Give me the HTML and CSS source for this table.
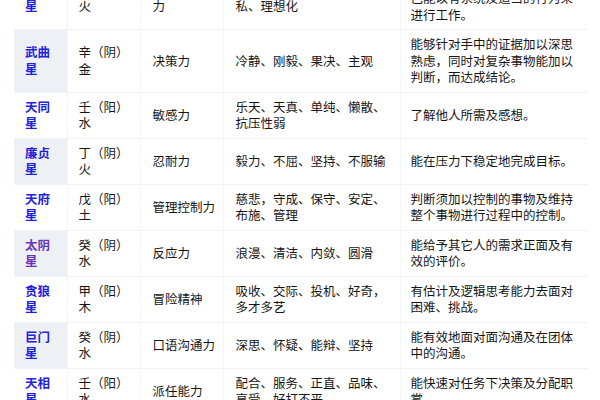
FILE: index.html
```html
<!DOCTYPE html>
<html lang="zh-CN">
<head>
<meta charset="utf-8">
<title>十四主星</title>
<link rel="stylesheet" href="styles.css">
</head>
<body>
<table class="stars">
  <colgroup>
    <col class="c1"><col class="c2"><col class="c3"><col class="c4"><col class="c5">
  </colgroup>
  <tbody>
    <tr>
      <th class="plain"><a class="star">太阳星</a></th>
      <td>丙（阳）火</td>
      <td>领导统御能力</td>
      <td>博爱、热情、积极、大公无私、理想化</td>
      <td>能作出全局性的决策，并使自己能以有系统及适当的行为来进行工作。</td>
    </tr>
    <tr>
      <th><a class="star">武曲星</a></th>
      <td>辛（阴）金</td>
      <td>决策力</td>
      <td>冷静、刚毅、果决、主观</td>
      <td>能够针对手中的证据加以深思熟虑，同时对复杂事物能加以判断，而达成结论。</td>
    </tr>
    <tr>
      <th class="plain"><a class="star">天同星</a></th>
      <td>壬（阳）水</td>
      <td>敏感力</td>
      <td>乐天、天真、单纯、懒散、抗压性弱</td>
      <td>了解他人所需及感想。</td>
    </tr>
    <tr>
      <th><a class="star">廉贞星</a></th>
      <td>丁（阴）火</td>
      <td>忍耐力</td>
      <td>毅力、不屈、坚持、不服输</td>
      <td>能在压力下稳定地完成目标。</td>
    </tr>
    <tr>
      <th class="plain"><a class="star">天府星</a></th>
      <td>戊（阳）土</td>
      <td>管理控制力</td>
      <td>慈悲，守成、保守、安定、布施、管理</td>
      <td>判断须加以控制的事物及维持整个事物进行过程中的控制。</td>
    </tr>
    <tr>
      <th><a class="star visited">太阴星</a></th>
      <td>癸（阴）水</td>
      <td>反应力</td>
      <td>浪漫、清洁、内敛、圆滑</td>
      <td>能给予其它人的需求正面及有效的评价。</td>
    </tr>
    <tr>
      <th class="plain"><a class="star">贪狼星</a></th>
      <td>甲（阳）木</td>
      <td>冒险精神</td>
      <td>吸收、交际、投机、好奇，多才多艺</td>
      <td>有估计及逻辑思考能力去面对困难、挑战。</td>
    </tr>
    <tr>
      <th><a class="star">巨门星</a></th>
      <td>癸（阴）水</td>
      <td>口语沟通力</td>
      <td>深思、怀疑、能辩、坚持</td>
      <td>能有效地面对面沟通及在团体中的沟通。</td>
    </tr>
    <tr>
      <th class="plain"><a class="star">天相星</a></th>
      <td>壬（阳）水</td>
      <td>派任能力</td>
      <td>配合、服务、正直、品味、享受、好打不平</td>
      <td>能快速对任务下决策及分配职掌。</td>
    </tr>
  </tbody>
</table>
</body>
</html>
```
FILE: styles.css
```css
html, body {
  margin: 0;
  padding: 0;
  background: #ffffff;
}

body {
  font-family: "Noto Sans CJK SC", "Noto Sans", sans-serif;
  font-size: 12.5px;
  line-height: 16.5px;
  color: #151515;
  overflow: hidden;
}

.stars {
  border-collapse: collapse;
  table-layout: fixed;
  width: 574px;
  margin: -33.5px 0 0 14px;
}

.c1 { width: 53px; }
.c2 { width: 73px; }
.c3 { width: 83px; }
.c4 { width: 177px; }
.c5 { width: 188px; }

.stars th,
.stars td {
  padding: 6px 8px 6px 11px;
  vertical-align: middle;
  text-align: left;
  border-top: 1px solid #f1f2f4;
  border-left: 1px solid #f4f5f6;
  font-weight: normal;
  word-break: break-all;
}

.stars th {
  background: #edf1f6;
  border-left: none;
}

.stars th.plain {
  background: #ffffff;
}

.stars td:nth-child(3) {
  padding-left: 12px;
  padding-right: 6px;
}

.stars td:nth-child(4) {
  padding-left: 12px;
  padding-right: 10px;
}

.stars td:nth-child(5) {
  padding-left: 10px;
  padding-right: 10px;
}

.star {
  font-weight: bold;
  color: #1e22dc;
  text-decoration: none;
}

.star.visited {
  color: #6a35b8;
}
```
